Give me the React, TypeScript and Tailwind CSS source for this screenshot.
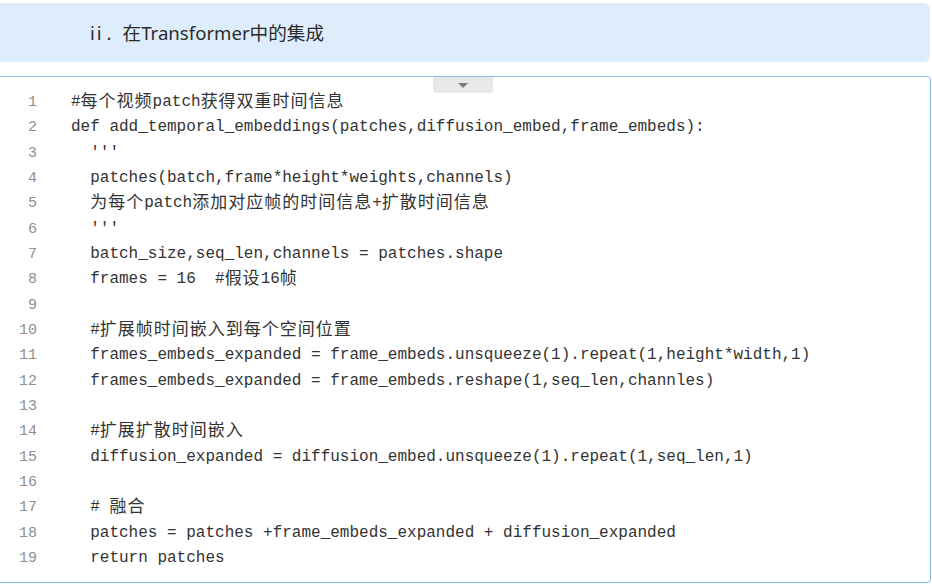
import React from "react";

const lines: string[] = [
  "#每个视频patch获得双重时间信息",
  "def add_temporal_embeddings(patches,diffusion_embed,frame_embeds):",
  "  '''",
  "  patches(batch,frame*height*weights,channels)",
  "  为每个patch添加对应帧的时间信息+扩散时间信息",
  "  '''",
  "  batch_size,seq_len,channels = patches.shape",
  "  frames = 16  #假设16帧",
  "",
  "  #扩展帧时间嵌入到每个空间位置",
  "  frames_embeds_expanded = frame_embeds.unsqueeze(1).repeat(1,height*width,1)",
  "  frames_embeds_expanded = frame_embeds.reshape(1,seq_len,channles)",
  "",
  "  #扩展扩散时间嵌入",
  "  diffusion_expanded = diffusion_embed.unsqueeze(1).repeat(1,seq_len,1)",
  "",
  "  # 融合",
  "  patches = patches +frame_embeds_expanded + diffusion_expanded",
  "  return patches",
];

function renderLine(text: string) {
  const parts = text.split(/([\u3000-\u9fff\uff00-\uffef]+)/);
  return parts.map((p, i) =>
    /[\u3000-\u9fff\uff00-\uffef]/.test(p) ? (
      <span
        key={i}
        className="relative top-[1px] text-[17px] leading-none tracking-[1px] [font-family:'Noto_Sans_CJK_SC',sans-serif]"
      >
        {p}
      </span>
    ) : (
      <span key={i}>{p}</span>
    )
  );
}

export default function App() {
  return (
    <div className="w-[932px] h-[584px] bg-white overflow-hidden relative">
      <div className="pt-[3px]">
        <div className="h-[59px] mr-[2px] bg-[#deedfc] rounded-r-[6px] flex items-center pl-[90px] text-[18.6px] text-[#2b2b2b] [font-family:'Noto_Sans','Noto_Sans_CJK_SC',sans-serif]">
          <span className="tracking-[2px]">ii</span>
          <span className="ml-[3px]">.</span>
          <span className="ml-[11px]">在Transformer中的集成</span>
        </div>
      </div>
      <div className="mt-[14px] ml-[-4px] mr-[1px] h-[507px] border border-[#86bdf2] rounded-[4px] bg-white relative pt-[13px]">
        <div className="absolute left-[436px] top-0 w-[60px] h-[16px] bg-[#e8e8e8] rounded-b-[4px] flex items-center justify-center">
          <svg width="10" height="5" viewBox="0 0 10 5">
            <path d="M0 0 L10 0 L5 5 Z" fill="#7a7a7a" />
          </svg>
        </div>
        {lines.map((l, i) => (
          <div key={i} className="flex items-baseline h-[25.33px] leading-[25.33px] whitespace-pre">
            <div className="w-[40px] text-right text-[15px] text-[#8f8f8f] [font-family:'Liberation_Mono',monospace]">
              {i + 1}
            </div>
            <div className="ml-[34px] text-[16px] text-[#333] [font-family:'Liberation_Mono','Noto_Sans_CJK_SC',monospace]">
              {renderLine(l)}
            </div>
          </div>
        ))}
      </div>
    </div>
  );
}
